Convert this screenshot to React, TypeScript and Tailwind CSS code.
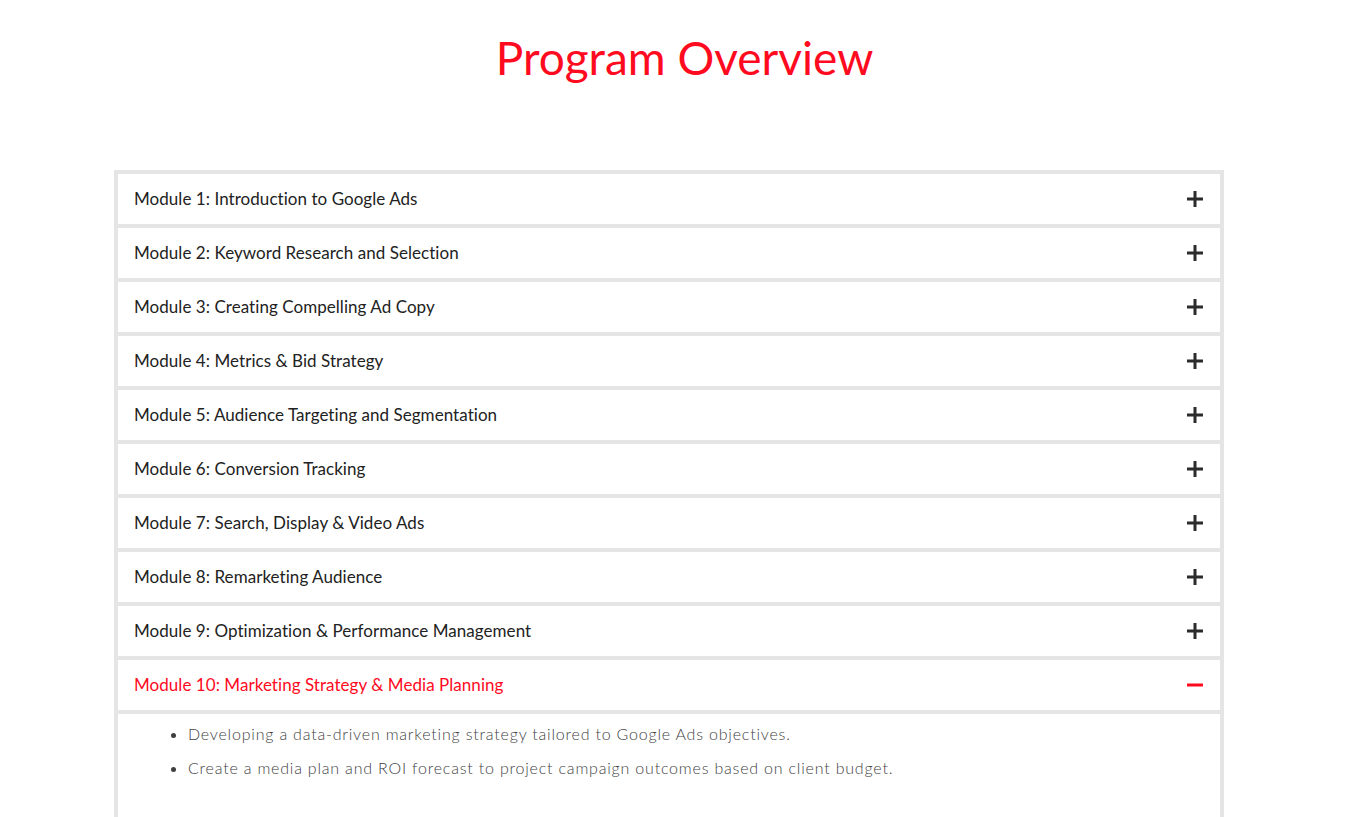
import React from "react";

const modules = [
  "Module 1: Introduction to Google Ads",
  "Module 2: Keyword Research and Selection",
  "Module 3: Creating Compelling Ad Copy",
  "Module 4: Metrics & Bid Strategy",
  "Module 5: Audience Targeting and Segmentation",
  "Module 6: Conversion Tracking",
  "Module 7: Search, Display & Video Ads",
  "Module 8: Remarketing Audience",
  "Module 9: Optimization & Performance Management",
  "Module 10: Marketing Strategy & Media Planning",
];

function Plus() {
  return (
    <svg width="16" height="16" viewBox="0 0 16 16" className="block">
      <rect x="0" y="6.5" width="16" height="3" fill="#2b2b2b" />
      <rect x="6.5" y="0" width="3" height="16" fill="#2b2b2b" />
    </svg>
  );
}

function Minus() {
  return (
    <svg width="16" height="16" viewBox="0 0 16 16" className="block">
      <rect x="0" y="6.5" width="16" height="3" fill="#ff0a1e" />
    </svg>
  );
}

export default function App() {
  return (
    <div className="min-h-[817px] bg-white font-['Lato',sans-serif]">
      <h1 className="pt-[26px] pl-[8px] text-center text-[46px] leading-[64px] text-[#ff0a1e] font-normal">
        Program Overview
      </h1>
      <div className="ml-[114px] mt-[80px] w-[1110px] border-4 border-[#e5e5e5] bg-[#e5e5e5] flex flex-col gap-[4px]">
        {modules.map((m, i) => {
          const open = i === modules.length - 1;
          return (
            <div key={m} className="flex flex-col gap-[4px]">
              <div className="h-[50px] bg-white flex items-center justify-between pl-[16px] pr-[17px]">
                <span className={`text-[17px] tracking-[0.05px] ${open ? "text-[#ff0a1e]" : "text-[#222]"}`}>{m}</span>
                {open ? <Minus /> : <Plus />}
              </div>
              {open && (
                <div className="bg-white pt-[3px] pb-[40px] pl-[70px]">
                  <ul className="list-disc text-[16px] font-light tracking-[0.8px] text-[#3f3f3f] leading-[34px]">
                    <li>Developing a data-driven marketing strategy tailored to Google Ads objectives.</li>
                    <li>Create a media plan and ROI forecast to project campaign outcomes based on client budget.</li>
                  </ul>
                </div>
              )}
            </div>
          );
        })}
      </div>
    </div>
  );
}
